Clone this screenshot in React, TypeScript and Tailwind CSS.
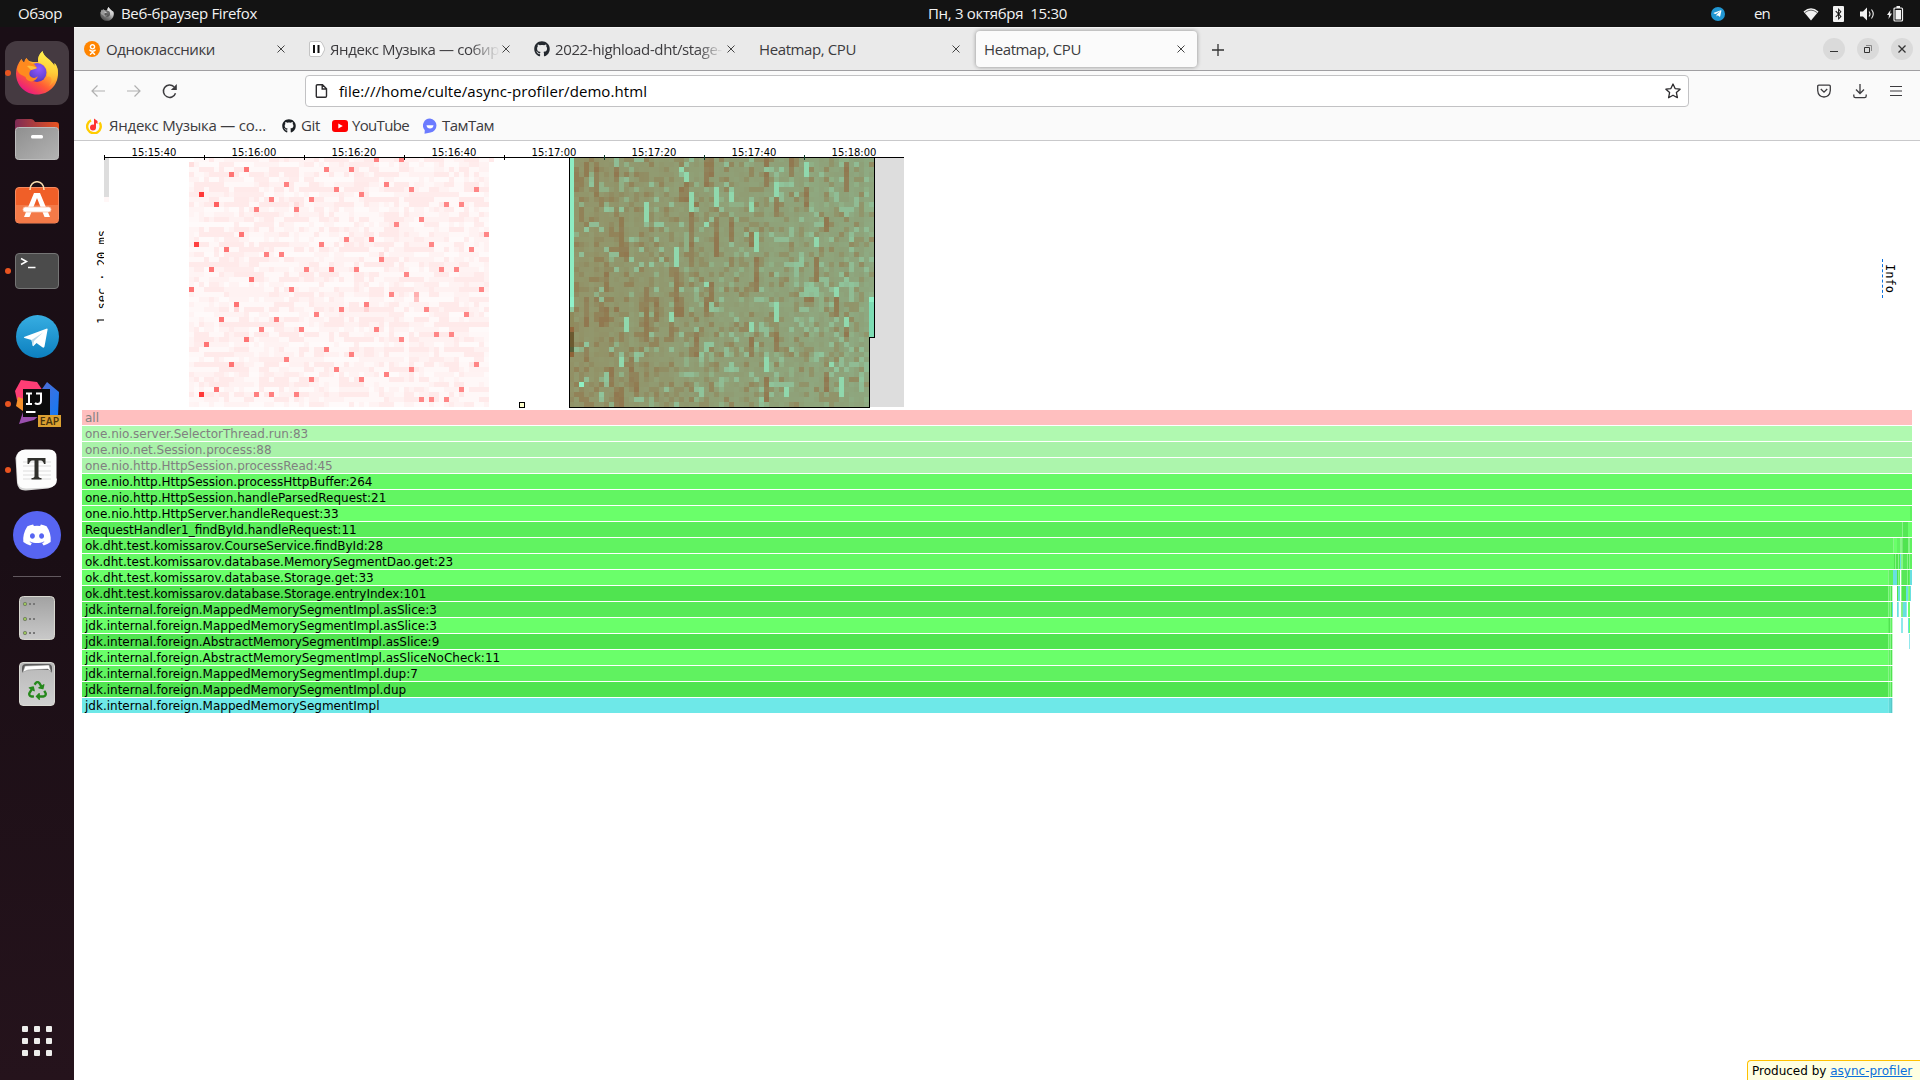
import { useLayoutEffect, useRef, useState } from 'react';
import type { ReactNode } from 'react';
import { FaBluetoothB, FaDiscord, FaGithub, FaOdnoklassniki, FaRecycle, FaTelegramPlane } from 'react-icons/fa';

/* Single-line label whose tracking is adjusted so it fills a known width. */
function Label({ w, className = '', children }: { w: number; className?: string; children: string }) {
  const ref = useRef<HTMLSpanElement>(null);
  const [spacing, setSpacing] = useState(0);
  useLayoutEffect(() => {
    if (ref.current) {
      setSpacing((w - ref.current.getBoundingClientRect().width) / children.length);
    }
  }, [w, children]);
  return (
    <span ref={ref} className={`inline-block shrink-0 whitespace-pre ${className}`} style={{ letterSpacing: spacing }}>
      {children}
    </span>
  );
}

function FirefoxLogo({ className = '' }: { className?: string }) {
  return (
    <svg viewBox="0 0 42 44" className={className}>
      <defs>
        <linearGradient id="ffBody" x1="0.85" y1="0.1" x2="0.25" y2="1">
          <stop offset="0" stopColor="#fff14d" />
          <stop offset="0.35" stopColor="#ffb52e" />
          <stop offset="0.65" stopColor="#ff5a36" />
          <stop offset="1" stopColor="#e8128a" />
        </linearGradient>
        <radialGradient id="ffGlobe" cx="0.6" cy="0.3" r="0.8">
          <stop offset="0" stopColor="#9059ff" />
          <stop offset="0.6" stopColor="#6a45d8" />
          <stop offset="1" stopColor="#4b2aa8" />
        </radialGradient>
        <linearGradient id="ffFlame" x1="0.5" y1="0" x2="0.5" y2="1">
          <stop offset="0" stopColor="#fff44f" />
          <stop offset="0.6" stopColor="#ffd23a" />
          <stop offset="1" stopColor="#ff9a2e" />
        </linearGradient>
      </defs>
      <path d="M26.500 0C23 3 21.500 7 22 11L17 11C14 10.500 12 10 10.500 7C9 8.500 8.500 10 8.500 11.500C7 11 6 9.500 5.500 8C2 12 0 17 0 22.500C0 34.500 9.500 43.500 21 43.500C32.500 43.500 42 34.500 42 22.500C42 17.500 40.500 14 38.500 12L38.500 15C37 12 34.500 9.500 32 7.500C29 5 27 3 26.500 0Z" fill="url(#ffBody)" />
      <path d="M26.500 0C22.500 4 21 8 23 12C28 13 33 18 31 26C35 24 38 29 33 35C39 31 42 25 42 20C41.500 16 40 13.500 38.500 12L38.500 15C36 10 28 7 26.500 0Z" fill="url(#ffFlame)" opacity="0.8" />
      <circle cx="21" cy="21.500" r="9.500" fill="url(#ffGlobe)" />
      <path d="M1 18C2 14 4 11 5.500 8C6 9.500 7 11 8.500 11.500C8.500 10 9 8.500 10.500 7C12 10.500 14 12 18 13C19 14 20 15 21 17C19 18 17 18 15 19C13 21 13 23 14 25C17 28 20 27 22 25C20 32 11 32 9.500 26C6 24 2 23 1 18Z" fill="#ff8a1f" />
      <path d="M11 15C15 14 19 15.500 21 17C19 18.500 17 18 15 19Z" fill="#ffbf3a" />
    </svg>
  );
}

function Running() {
  return <span className="absolute left-[5px] top-1/2 size-[6px] -translate-y-1/2 rounded-full bg-[#e95420]" />;
}

function DockItem({ mt, running, children }: { mt: string; running?: boolean; children: ReactNode }) {
  return (
    <div className={`relative flex w-full shrink-0 justify-center ${mt}`}>
      {running && <Running />}
      {children}
    </div>
  );
}

function Dock() {
  return (
    <nav className="flex h-full w-[74px] shrink-0 flex-col bg-gradient-to-b from-[#1a0e16] via-[#1a0e15] to-[#25131c]">
      <DockItem mt="mt-[14px]" running>
        <div className="flex size-[64px] items-center justify-center rounded-[12px] bg-[#453a41]">
          <FirefoxLogo className="h-[44px] w-[42px]" />
        </div>
      </DockItem>

      <DockItem mt="mt-[14px]">
        <svg viewBox="0 0 44 41" className="h-[41px] w-[44px]">
          <defs>
            <linearGradient id="folderBack"><stop offset="0" stopColor="#7d2b55" /><stop offset="1" stopColor="#e95420" /></linearGradient>
            <linearGradient id="folderFront" x1="0" y1="0" x2="1" y2="1"><stop offset="0" stopColor="#8f8f8f" /><stop offset="1" stopColor="#b3b3b3" /></linearGradient>
          </defs>
          <path d="M0 20V3Q0 0 3 0H16Q18 0 19 1.500L20 3H41Q44 3 44 6V20Z" fill="url(#folderBack)" />
          <rect x="0.500" y="8.500" width="43" height="32" rx="3" fill="url(#folderFront)" stroke="#bdbdbd" />
          <rect x="16" y="16" width="12" height="3.500" rx="1.500" fill="#fff" />
        </svg>
      </DockItem>

      <DockItem mt="mt-[21px]">
        <svg viewBox="0 0 44 43" className="h-[43px] w-[44px]">
          <rect x="0.500" y="6.500" width="43" height="35.500" rx="3.500" fill="#f05f28" stroke="#f58a60" />
          <path d="M1 24H43V39Q43 41.500 40 41.500H4Q1 41.500 1 39Z" fill="#f47a48" />
          <path d="M15 9C15 -2 29 -2 29 9" fill="none" stroke="#f8dcae" strokeWidth="1.600" />
          <path d="M19 12H25L35 36H29.500L22 17L14.500 36H9Z" fill="#fff" />
          <rect x="8" y="26" width="28" height="5" rx="2.500" fill="#fff" stroke="#f9c3aa" strokeWidth="0.800" />
        </svg>
      </DockItem>

      <DockItem mt="mt-[29px]" running>
        <svg viewBox="0 0 44 36" className="h-[36px] w-[44px]">
          <rect x="0.500" y="0.500" width="43" height="35" rx="3.500" fill="#4b4b4b" stroke="#757575" />
          <path d="M6 5.500L11.500 8.500L6 11.500M13 14.500H20.500" fill="none" stroke="#fff" strokeWidth="1.500" />
        </svg>
      </DockItem>

      <DockItem mt="mt-[26px]">
        <svg viewBox="0 0 43 43" className="size-[43px]">
          <defs><linearGradient id="tg" x2="0" y2="1"><stop offset="0" stopColor="#37aee2" /><stop offset="1" stopColor="#0c7fbf" /></linearGradient></defs>
          <circle cx="21.500" cy="21.500" r="21.500" fill="url(#tg)" />
          <path d="M8 22L31 13.500Q32 13.500 31.500 15L28.500 31.500Q28 33.500 26 32L20.500 28L17.500 31Q16.500 31.500 16.500 30L15.500 25L8.500 23Q7.500 22.500 8 22Z" fill="#fff" />
          <path d="M15.500 25L27 17.500L18 26L17 31Z" fill="#b9d9ea" />
        </svg>
      </DockItem>

      <DockItem mt="mt-[22px]" running>
        <svg viewBox="0 0 46 47" className="ml-[2px] h-[47px] w-[46px]">
          <defs><linearGradient id="ijBlue" x2="1" y2="1"><stop offset="0" stopColor="#5c6ad0" /><stop offset="1" stopColor="#087cfa" /></linearGradient></defs>
          <path d="M27 9L32 2L44 12L43 36L30 44L20 30Z" fill="url(#ijBlue)" />
          <path d="M6 0L22 2L30 14L14 26L2 20L0 11Z" fill="#fe3d75" />
          <path d="M3 17L12 20L12 34L1 26Z" fill="#f7912c" />
          <path d="M10 26L26 34L19 40L4 44Z" fill="#9a4fae" />
          <rect x="8" y="9" width="27" height="28" fill="#0b0b0b" />
          <path d="M11 13.500H17M14 13.500V24M11 24H17M21 13.500H26V21Q26 24 22.500 24Q21 24 20 23M11 32H20.500" fill="none" stroke="#fff" strokeWidth="2" />
          <rect x="23" y="35" width="23" height="12" fill="#dba131" />
          <text x="34.500" y="45" textAnchor="middle" fontFamily="Open Sans, sans-serif" fontSize="10.500" fontWeight="600" fill="#45320c">EAP</text>
        </svg>
      </DockItem>

      <DockItem mt="mt-[22px]" running>
        <svg viewBox="0 0 42 42" className="-ml-[2px] size-[42px]">
          <path d="M9 1Q2 2 0.500 9L2 34Q3 42 11 41.500L33 39.500Q42 38 42 30Z" fill="#d6d6d6" />
          <path d="M10 0.500H34Q41.500 0.500 41.500 8V31Q41.500 38 34 38.500L11 39.500Q3 39.500 2.500 32L1.500 9Q2 1 10 0.500Z" fill="#fdfdfd" />
          <path d="M8 13H36M8 17H36M8 22H36M8 26H36M8 30H36" stroke="#ddd" />
          <path d="M12.500 9H30.500V15H29Q28 11.500 26 11.500H23.500V27Q23.500 29 26.500 29V30.500H16.500V29Q19.500 29 19.500 27V11.500H17Q15 11.500 14 15H12.500Z" fill="#30302c" />
        </svg>
      </DockItem>

      <DockItem mt="mt-[20px]">
        <div className="flex size-[48px] items-center justify-center rounded-full bg-[#5765f2]">
          <FaDiscord className="size-[30px] text-white" />
        </div>
      </DockItem>

      <div className="mx-auto mt-[17px] h-px w-[48px] shrink-0 bg-[#61585e]" />

      <DockItem mt="mt-[19px]">
        <svg viewBox="0 0 36 44" className="h-[44px] w-[36px]">
          <defs><linearGradient id="disk" x2="0" y2="1"><stop offset="0" stopColor="#a2a2a2" /><stop offset="1" stopColor="#c9c9c9" /></linearGradient></defs>
          <rect x="0.500" y="0.500" width="35" height="43" rx="4" fill="url(#disk)" stroke="#d8d8d0" />
          {[8, 23, 37].map((y) => (
            <g key={y}>
              <circle cx="6" cy={y} r="1.700" fill="#9bc55a" stroke="#6d7563" strokeWidth="0.800" />
              <path d={`M10 ${y}H12M14 ${y}H16`} stroke="#777" strokeWidth="2" />
            </g>
          ))}
        </svg>
      </DockItem>

      <DockItem mt="mt-[22px]">
        <div className="flex h-[44px] w-[36px] flex-col items-center rounded-[4px] border border-[#dadad4] bg-gradient-to-b from-[#b8b8b8] to-[#d0d0d0]">
          <svg viewBox="0 0 30 9" className="mt-[1px] h-[9px] w-[30px]">
            <path d="M0 9V4Q0 0 4 0H26Q30 0 30 4V9Q29 6 27 6H3Q1 6 0 9Z" fill="#5b5b5b" />
            <path d="M1 8L3 2L27 1L29 8L26 5L6 6Z" fill="#fff" stroke="#888" strokeWidth="0.500" />
          </svg>
          <FaRecycle className="mt-[8px] size-[19px] text-[#26881c]" />
        </div>
      </DockItem>

      <div className="mx-auto mt-auto mb-[24px] grid grid-cols-3 gap-[6px]">
        {Array.from({ length: 9 }, (_, i) => (
          <span key={i} className="size-[6px] rounded-[1px] bg-[#eeeeec]" />
        ))}
      </div>
    </nav>
  );
}

function TopBar() {
  return (
    <header className="flex h-[27px] w-full shrink-0 items-center bg-[#131313] text-[15px] leading-[27px] text-[#f2f2f2]">
      <Label w={44} className="ml-[18px]">Обзор</Label>
      <FirefoxLogo className="ml-[38px] h-[14px] w-[14px] grayscale" />
      <Label w={136} className="ml-[7px]">Веб-браузер Firefox</Label>
      <Label w={139} className="ml-[671px]">Пн, 3 октября  15:30</Label>
      <span className="ml-[644px] flex size-[14px] shrink-0 items-center justify-center rounded-full bg-[#2196d2]">
        <FaTelegramPlane className="-ml-px size-[9px] text-white" />
      </span>
      <Label w={16} className="ml-[29px]">en</Label>
      <svg viewBox="0 0 16 14" className="ml-[33px] h-[14px] w-[16px] shrink-0">
        <path d="M0.500 4.500Q8 -2 15.500 4.500L8 13.500Z" fill="#f2f2f2" />
        <path d="M2 5.500Q8 0.800 14 5.500" fill="none" stroke="#555" strokeWidth="0.900" />
      </svg>
      <span className="ml-[14px] flex h-[16px] w-[11px] shrink-0 items-center justify-center rounded-[1px] bg-[#f2f2f2]">
        <FaBluetoothB className="size-[12px] text-[#131313]" />
      </span>
      <svg viewBox="0 0 15 14" className="ml-[16px] h-[14px] w-[15px] shrink-0">
        <path d="M0 4.500H3L7 0.500V13.500L3 9.500H0Z" fill="#f2f2f2" />
        <path d="M9 4.500Q11 7 9 9.500M11.500 2.500Q15 7 11.500 11.500" fill="none" stroke="#f2f2f2" strokeWidth="1.100" />
      </svg>
      <svg viewBox="0 0 17 16" className="ml-[12px] h-[16px] w-[17px] shrink-0">
        <path d="M3.500 4L0 9H2L1.500 13L5 7.500H3Z" fill="#f2f2f2" />
        <rect x="7" y="2" width="8.500" height="13" rx="1" fill="none" stroke="#f2f2f2" strokeWidth="1.200" />
        <rect x="8.500" y="4" width="5.500" height="9.500" fill="#f2f2f2" />
        <rect x="9.500" y="0" width="3.500" height="2" fill="#f2f2f2" />
      </svg>
    </header>
  );
}

function Cross({ className = '' }: { className?: string }) {
  return (
    <svg viewBox="0 0 8 8" className={`size-[8px] shrink-0 ${className}`}>
      <path d="M0.500 0.500L7.500 7.500M7.500 0.500L0.500 7.500" stroke="#444" strokeWidth="1" />
    </svg>
  );
}

function TabStrip() {
  return (
    <div className="flex h-[44px] shrink-0 items-center border-t border-b border-t-[#f7f7f7] border-b-[#a09fa2] bg-[#eaeaea] text-[15px] text-[#3c3b3e]">
      <div className="flex w-[225px] shrink-0 items-center pl-[10px]">
        <span className="flex size-[16px] shrink-0 items-center justify-center rounded-full bg-[#ff8500]">
          <FaOdnoklassniki className="size-[11px] text-white" />
        </span>
        <Label w={109} className="ml-[6px]">Одноклассники</Label>
        <Cross className="ml-[62px]" />
      </div>
      <div className="flex w-[225px] shrink-0 items-center pl-[10px]">
        <svg viewBox="0 0 16 16" className="size-[16px] shrink-0">
          <path d="M2 0.500H11Q12 0.500 13 2L15.500 7Q16 8 15.500 9L13 14Q12 15.500 11 15.500H2Q0.500 15.500 0.500 14V2Q0.500 0.500 2 0.500Z" fill="#fff" stroke="#c4c4c4" />
          <path d="M5 4V12M9.500 4V12" stroke="#111" strokeWidth="2" />
        </svg>
        <div className="ml-[5px] w-[170px] shrink-0 [mask-image:linear-gradient(to_right,black_82%,transparent)]">
          <Label w={169}>Яндекс Музыка — собир</Label>
        </div>
        <Cross className="ml-[2px]" />
      </div>
      <div className="flex w-[225px] shrink-0 items-center pl-[10px]">
        <FaGithub className="size-[16px] shrink-0 text-[#24292f]" />
        <div className="ml-[5px] w-[168px] shrink-0 [mask-image:linear-gradient(to_right,black_85%,transparent)]">
          <Label w={167}>2022-highload-dht/stage-</Label>
        </div>
        <Cross className="ml-[4px]" />
      </div>
      <div className="flex w-[227px] shrink-0 items-center pl-[10px]">
        <Label w={97}>Heatmap, CPU</Label>
        <Cross className="ml-[96px]" />
      </div>
      <div className="flex h-[36px] w-[221px] shrink-0 items-center rounded-[4px] bg-[#fbfbfb] pl-[8px] shadow-[0_0_4px_rgba(0,0,0,0.4)]">
        <Label w={97}>Heatmap, CPU</Label>
        <Cross className="ml-[96px]" />
      </div>
      <svg viewBox="0 0 12 12" className="mt-px ml-[15px] size-[12px] shrink-0">
        <path d="M6 0V12M0 6H12" stroke="#333" strokeWidth="1.300" />
      </svg>
      <div className="mr-[7px] ml-auto flex gap-[12px]">
        <span className="flex size-[22px] items-center justify-center rounded-full bg-[#dadada]">
          <svg viewBox="0 0 8 8" className="size-[8px]"><path d="M0 6.500H8" stroke="#333" /></svg>
        </span>
        <span className="flex size-[22px] items-center justify-center rounded-full bg-[#dadada]">
          <svg viewBox="0 0 8 8" className="size-[8px]">
            <path d="M0.500 2.500H5.500V7.500H0.500Z" fill="none" stroke="#333" />
            <path d="M2 0.500H7.500V6" fill="none" stroke="#8a8a8a" />
          </svg>
        </span>
        <span className="flex size-[22px] items-center justify-center rounded-full bg-[#dadada]">
          <svg viewBox="0 0 8 8" className="size-[8px]"><path d="M0.500 0.500L7.500 7.500M7.500 0.500L0.500 7.500" stroke="#333" strokeWidth="1.300" /></svg>
        </span>
      </div>
    </div>
  );
}

function NavBar() {
  return (
    <div className="flex h-[41px] shrink-0 items-center bg-[#fafafa] pb-px">
      <svg viewBox="0 0 14 12" className="ml-[17px] h-[12px] w-[14px] shrink-0"><path d="M14 6H1M6.500 0.500L1 6L6.500 11.500" fill="none" stroke="#b0b0b0" strokeWidth="1.200" /></svg>
      <svg viewBox="0 0 14 12" className="ml-[22px] h-[12px] w-[14px] shrink-0"><path d="M0 6H13M7.500 0.500L13 6L7.500 11.500" fill="none" stroke="#b0b0b0" strokeWidth="1.200" /></svg>
      <svg viewBox="0 0 16 16" className="ml-[21px] size-[16px] shrink-0">
        <path d="M13.500 10.200A6.200 6.200 0 1 1 12 3.800" fill="none" stroke="#3c3b3e" strokeWidth="1.500" />
        <path d="M14.800 1V7H8.800Z" fill="#3c3b3e" />
      </svg>
      <div className="ml-[127px] flex h-[32px] w-[1384px] shrink-0 items-center rounded-[4px] border border-[#c2c2c4] bg-white">
        <svg viewBox="0 0 13 14" className="ml-[9px] h-[14px] w-[13px] shrink-0">
          <path d="M2.500 0.800H7.500L11.500 4.800V12Q11.500 13.200 10.300 13.200H2.500Q1.300 13.200 1.300 12V2Q1.300 0.800 2.500 0.800ZM7.200 1V5H11.200" fill="none" stroke="#2c2b2e" strokeWidth="1.400" />
        </svg>
        <Label w={308} className="ml-[11px] text-[15px] text-black">file:///home/culte/async-profiler/demo.html</Label>
        <svg viewBox="0 0 16 16" className="mr-[7px] ml-auto size-[16px] shrink-0">
          <path d="M8 1L10.100 5.600L15.100 6.200L11.400 9.600L12.400 14.700L8 12.200L3.600 14.700L4.600 9.600L0.900 6.200L5.900 5.600Z" fill="none" stroke="#2c2b2e" strokeWidth="1.300" strokeLinejoin="round" />
        </svg>
      </div>
      <svg viewBox="0 0 14 14" className="ml-[128px] size-[14px] shrink-0">
        <path d="M1.800 1.200H12.200Q13.300 1.200 13.300 2.300V6.500Q12.800 12.800 7 13Q1.200 12.800 0.700 6.500V2.300Q0.700 1.200 1.800 1.200ZM3.800 5L7 8.200L10.200 5" fill="none" stroke="#3c3b3e" strokeWidth="1.300" />
      </svg>
      <svg viewBox="0 0 14 16" className="ml-[22px] h-[16px] w-[14px] shrink-0">
        <path d="M7 1V10.500M3 6.500L7 10.500L11 6.500M0.800 11.500V13Q0.800 14.600 2.400 14.600H11.600Q13.200 14.600 13.200 13V11.500" fill="none" stroke="#3c3b3e" strokeWidth="1.300" />
      </svg>
      <svg viewBox="0 0 12 12" className="ml-[23px] size-[12px] shrink-0"><path d="M0 1.500H12M0 6H12M0 10.500H12" stroke="#3c3b3e" strokeWidth="1.100" /></svg>
    </div>
  );
}

function Bookmarks() {
  return (
    <div className="flex h-[29px] shrink-0 items-center border-b border-[#c9c9cb] bg-[#fafafa] pb-px text-[15px] text-[#3c3b3e]">
      <svg viewBox="0 0 16 16" className="ml-[12px] size-[16px] shrink-0">
        <path d="M5 2.300A6.800 6.800 0 1 0 13.500 4.500" fill="none" stroke="#fc0" strokeWidth="2.400" />
        <circle cx="7" cy="9.500" r="3" fill="#f33" />
        <path d="M8 10V0.500L11.500 3V6L10 5V10Z" fill="#f33" />
      </svg>
      <Label w={157} className="ml-[7px]">Яндекс Музыка — со…</Label>
      <FaGithub className="ml-[16px] size-[14px] shrink-0 text-[#1b1f23]" />
      <Label w={19} className="ml-[5px]">Git</Label>
      <svg viewBox="0 0 16 12" className="ml-[12px] h-[12px] w-[16px] shrink-0">
        <rect width="16" height="12" rx="3" fill="#f00" />
        <path d="M6.300 3.400L10.800 6L6.300 8.600Z" fill="#fff" />
      </svg>
      <Label w={57} className="ml-[4px]">YouTube</Label>
      <svg viewBox="0 0 14 16" className="ml-[14px] h-[16px] w-[14px] shrink-0">
        <path d="M7 0.500A7 7 0 0 1 7.500 14.400L1.500 15.800L1.800 12.200A7 7 0 0 1 7 0.500Z" fill="#6b7bff" />
        <path d="M3.500 7.200H10.500Q10 10.500 7 10.500Q4 10.500 3.500 7.200Z" fill="#fff" />
      </svg>
      <Label w={52} className="ml-[5px]">ТамТам</Label>
    </div>
  );
}

/* ---------- heatmap ---------- */

const CELL = 5;
const ROWS = 50;
const COLS = 60;

function makeRandom(seed: number) {
  let s = seed;
  return () => {
    s = (s * 1664525 + 1013904223) >>> 0;
    return s / 4294967296;
  };
}

/* Hot samples per row of the first burst: [row, columns]. */
const HOT: [number, number[]][] = [
  [0, [37, 42]], [2, [11, 27, 32]], [3, [8]], [5, [19, 39]], [6, [29, 44, 57]], [7, [34]], [8, [16, 24]],
  [9, [51, 54]], [10, [13, 21]], [12, [46]], [13, [41]], [15, [10, 59]], [16, [31, 36]], [17, [26, 48]],
  [18, [7, 56]], [19, [15, 18]], [20, [38]], [22, [4, 23, 28, 33, 50, 53]], [23, [43]], [24, [12]],
  [26, [0, 20, 58]], [27, [40]], [29, [9, 35]], [30, [30, 47]], [31, [25, 55]], [32, [6, 17]],
  [34, [14, 22, 37]], [35, [49, 52]], [36, [11, 42]], [37, [3]], [38, [27]], [39, [32]], [40, [19]],
  [41, [8, 57]], [42, [29, 44]], [43, [39]], [44, [24, 34]], [46, [5, 54]], [47, [13, 16, 21]], [48, [46, 48, 51]],
];
const SPECIAL: [number, number, string][] = [
  [2, 7, '#ff3a3a'], [1, 17, '#ff4040'], [2, 47, '#ff3a3a'], [5, 9, '#ff6060'], [45, 27, '#ffb0b0'],
  [45, 28, '#ffc4c4'], [9, 30, '#ffdada'], [35, 30, '#ffd4d4'], [21, 9, '#ffdede'], [38, 19, '#ffdede'], [0, 1, '#ffdede'],
];

/* Vertical streaks of the selected burst: [column, first row, last row]. */
const BRIGHT: [number, number, number][] = [
  [15, 9, 12], [21, 18, 21], [24, 7, 10], [29, 6, 9], [32, 7, 8], [36, 9, 10], [37, 15, 18], [41, 5, 7],
  [47, 1, 3], [49, 16, 17], [11, 32, 34], [20, 31, 32], [10, 40, 41], [41, 29, 32], [36, 33, 34], [39, 40, 42],
  [54, 44, 47], [43, 46, 47], [22, 2, 2], [23, 3, 4], [53, 26, 27], [55, 32, 33], [52, 41, 41], [27, 13, 13], [27, 25, 25],
];
const PALE: [number, number, number][] = [
  [42, 5, 5], [43, 5, 5], [44, 5, 5], [32, 6, 6], [22, 3, 3], [40, 45, 45], [41, 45, 45], [42, 45, 45], [43, 45, 45],
  [44, 45, 45], [58, 44, 46], [38, 48, 49], [13, 39, 40], [10, 39, 39], [26, 46, 47], [47, 25, 26], [48, 25, 26], [46, 27, 27],
  [47, 27, 27], [49, 26, 27], [45, 21, 23], [46, 20, 21], [31, 1, 1], [9, 0, 1], [4, 4, 5], [16, 5, 5], [17, 13, 13],
  [18, 13, 13], [22, 26, 26], [24, 8, 8], [27, 37, 38], [28, 37, 37], [26, 39, 39], [49, 39, 40], [50, 39, 39], [53, 7, 8],
  [55, 10, 11], [56, 10, 10], [54, 10, 10], [54, 25, 25], [55, 24, 25], [56, 25, 25], [57, 25, 25], [56, 15, 16],
  [31, 42, 42], [32, 41, 42], [33, 42, 42], [39, 34, 34], [38, 33, 34], [38, 28, 28], [28, 29, 30], [14, 48, 48],
  [6, 28, 28], [7, 10, 10], [10, 10, 10], [8, 38, 38], [7, 43, 44], [6, 47, 47], [2, 19, 19], [3, 14, 14], [12, 20, 20],
  [13, 22, 22], [12, 16, 16], [14, 18, 18], [16, 21, 21], [3, 37, 37], [40, 2, 2], [42, 2, 2], [39, 2, 2], [53, 42, 42],
];
const BROWN: [number, number, number][] = [
  [21, 22, 26], [24, 11, 20], [29, 12, 19], [32, 12, 16], [36, 15, 17], [36, 36, 39], [37, 20, 26], [41, 8, 11],
  [41, 35, 38], [47, 6, 9], [15, 26, 36], [20, 33, 36], [21, 27, 31], [22, 28, 31], [27, 0, 5], [28, 0, 3], [39, 0, 5],
  [39, 44, 48], [55, 1, 6], [9, 2, 4], [3, 1, 3], [1, 2, 6], [5, 2, 7], [10, 12, 19], [11, 17, 20], [7, 23, 26],
  [49, 20, 24], [48, 28, 28], [47, 28, 28], [53, 28, 31], [22, 6, 8], [23, 5, 8], [5, 28, 28], [6, 30, 33], [7, 30, 32],
  [9, 30, 30], [17, 28, 32], [14, 33, 33], [25, 35, 39], [28, 25, 28], [27, 28, 31], [51, 43, 46], [51, 12, 14], [12, 40, 45],
  [13, 43, 46], [3, 38, 40], [3, 28, 33], [8, 42, 45], [10, 46, 49], [9, 47, 49], [55, 34, 35], [25, 9, 9], [44, 0, 3],
];
const BROWN_TONES = ['#917c52', '#917f57', '#91845b', '#917850'];

const RED_CELLS = (() => {
  const rnd = makeRandom(7);
  const out: [number, number, string][] = [];
  for (let r = 0; r < ROWS; r++) {
    const dense = r % 3 !== 1;
    let tone = '#fff4f4';
    for (let c = 0; c < COLS + 1; c++) {
      if ((c === 0 && r === 0) || (c === COLS && r > 0)) continue;
      if (rnd() < 0.68) {
        const n = rnd();
        if (dense) tone = n < 0.42 ? '#ffeaea' : n < 0.65 ? '#fff2f2' : '#fff8f8';
        else tone = n < 0.2 ? '#ffecec' : n < 0.6 ? '#fff3f3' : '#fffafa';
      }
      out.push([c, r, tone]);
    }
  }
  HOT.forEach(([r, cs]) => cs.forEach((c) => out.push([c, r, c < 13 ? '#ff7474' : c < 40 ? '#ff8080' : '#ff8686'])));
  return out.concat(SPECIAL);
})();

const GREEN_CELLS = (() => {
  const rnd = makeRandom(99);
  const out: [number, number, string][] = [];
  const rgb = (r: number, g: number, b: number) => `rgb(${Math.round(r)},${Math.round(g)},${Math.round(b)})`;
  for (let c = 0; c <= COLS; c++) {
    const t = c / COLS;
    const tint = rnd() * 6 - 3;
    for (let r = 0; r < ROWS; r++) {
      if (c === COLS && r > 35) continue;
      const n = rnd();
      const j = rnd() * 6 - 3 + tint;
      let color = rgb(146 - 4 * t, 147 + 19 * Math.pow(t, 0.7) + j, 104 + 22 * Math.pow(t, 0.7) + j);
      if (n < 0.12 - 0.08 * t) color = rgb(146, 130 + 10 * t, 88 + 10 * t);
      else if (n < 0.24 - 0.08 * t) color = rgb(145, 139 + 10 * t, 97 + 10 * t);
      else if (n > 0.97 - 0.06 * t) color = rgb(144, 188, 148);
      else if (n > 0.93 - 0.08 * t) color = rgb(143, 176, 134);
      out.push([c, r, color]);
    }
  }
  const paint = (list: [number, number, number][], tones: string[]) =>
    list.forEach(([c, a, b]) => {
      for (let r = a; r <= b; r++) out.push([c, r, tones[Math.floor(rnd() * tones.length)]]);
    });
  paint(BROWN, BROWN_TONES);
  paint(PALE, ['#8fc49b', '#8fbd95']);
  paint(BRIGHT, ['#90d8ad']);
  paint([[0, 0, 27]], ['#8eedc4']);
  paint([[0, 28, 29]], ['#90f3cb']);
  paint([[0, 30, 30]], ['#8fc79e']);
  paint([[0, 31, 33]], ['#8f8a5c']);
  paint([[0, 34, 34]], ['#93683e']);
  paint([[0, 35, 37]], ['#6c5a30']);
  paint([[0, 38, 38]], ['#57603a']);
  paint([[0, 39, 39]], ['#8f6438']);
  paint([[2, 45, 45]], ['#8ef0c4']);
  paint([[60, 28, 28]], ['#8ef0c4']);
  paint([[60, 29, 35]], ['#7ddcb3']);
  return out;
})();

const TIMES = ['15:15:40', '15:16:00', '15:16:20', '15:16:40', '15:17:00', '15:17:20', '15:17:40', '15:18:00'];

function Heatmap() {
  return (
    <svg viewBox="74 141 860 269" className="h-[269px] w-[860px] shrink-0" shapeRendering="crispEdges">
      <clipPath id="legendClip"><rect x="90" y="150" width="14" height="250" /></clipPath>
      <g clipPath="url(#legendClip)">
        <text transform="translate(106 324) rotate(-90)" fontFamily="DejaVu Sans Mono, monospace" fontSize="12" xmlSpace="preserve">1 sec · 20 ms</text>
      </g>
      <rect x="104" y="158" width="5" height="39" fill="#ddd" />
      <rect x="104" y="197" width="5" height="5" fill="#fff7f7" />
      {RED_CELLS.map(([c, r, f], i) => (
        <rect key={i} x={189 + c * CELL} y={157 + r * CELL} width={CELL} height={CELL} fill={f} />
      ))}
      {GREEN_CELLS.map(([c, r, f], i) => (
        <rect key={i} x={569 + c * CELL} y={157 + r * CELL} width={CELL} height={CELL} fill={f} />
      ))}
      <path d="M875 158H904V407H870V338H875Z" fill="#ddd" />
      <path d="M569.500 157.500H874.500V337.500H869.500V407.500H569.500Z" fill="none" stroke="#000" />
      <rect x="519.500" y="402.500" width="5" height="5" fill="#ffffcc" stroke="#000" />
      <path d="M104 157.500H904" stroke="#000" />
      {TIMES.map((t, i) => (
        <g key={t}>
          <rect x={104 + i * 100} y="155" width="1" height="5" fill={i > 4 ? '#123f2c' : '#000'} />
          <text x={154 + i * 100} y="156" textAnchor="middle" fontFamily="DejaVu Sans, sans-serif" fontSize="10">{t}</text>
        </g>
      ))}
    </svg>
  );
}

/* ---------- flame graph ---------- */

type Frame = { name: string; color: string; end: number; dim?: boolean; tail?: [number, string][] };

const L = '#88f588';
const G = '#6aff6a';
const M = '#60f260';
const D = '#50e450';
const C = '#68e0e0';
const P = '#90e8ec';
const W = '#ffffff';
const NARROW: [number, string][] = [[1, L], [1, M], [1, L], [1, D], [1, '#c4f7c4']];

const FRAMES: Frame[] = [
  { name: 'all', color: '#ffbfbf', end: 1912, dim: true },
  { name: 'one.nio.server.SelectorThread.run:83', color: '#b0f9b0', end: 1912, dim: true },
  { name: 'one.nio.net.Session.process:88', color: '#a9f2a9', end: 1912, dim: true },
  { name: 'one.nio.http.HttpSession.processRead:45', color: '#acf5ac', end: 1912, dim: true },
  { name: 'one.nio.http.HttpSession.processHttpBuffer:264', color: '#65f965', end: 1912 },
  { name: 'one.nio.http.HttpSession.handleParsedRequest:21', color: '#62f562', end: 1912 },
  { name: 'one.nio.http.HttpServer.handleRequest:33', color: '#6aff6a', end: 1910, tail: [[2, '#60f260']] },
  { name: 'RequestHandler1_findById.handleRequest:11', color: '#5aed5a', end: 1902, tail: [[1, L], [5, '#55e855'], [4, G]] },
  { name: 'ok.dht.test.komissarov.CourseService.findById:28', color: '#61f361', end: 1893, tail: [[1, L], [3, G], [3, M], [2, L], [1, '#77e877'], [5, D], [2, L], [2, M]] },
  { name: 'ok.dht.test.komissarov.database.MemorySegmentDao.get:23', color: '#65f965', end: 1894, tail: [[1, D], [1, L], [2, D], [1, L], [1, D], [1, C], [2, L], [4, '#58e858'], [1, L], [1, D], [1, L], [2, M]] },
  { name: 'ok.dht.test.komissarov.database.Storage.get:33', color: '#6aff6a', end: 1888, tail: [[1, L], [4, M], [4, C], [1, D], [1, L], [1, M], [1, W], [1, L], [5, '#58e858'], [1, L], [1, D], [1, M], [2, C]] },
  { name: 'ok.dht.test.komissarov.database.Storage.entryIndex:101', color: '#50e450', end: 1888, tail: [[1, L], [1, M], [1, L], [1, D], [1, '#c4f7c4'], [4, W], [1, D], [2, C], [1, W], [1, L], [4, D], [2, C], [1, L], [1, G], [1, C], [1, W]] },
  { name: 'jdk.internal.foreign.MappedMemorySegmentImpl.asSlice:3', color: '#57ea57', end: 1888, tail: [[1, L], [1, M], [1, L], [1, D], [1, C], [4, W], [1, C], [1, P], [2, W], [1, L], [1, '#80ea90'], [3, C], [1, P], [1, W], [2, G], [2, W]] },
  { name: 'jdk.internal.foreign.MappedMemorySegmentImpl.asSlice:3', color: '#6aff6a', end: 1888, tail: [[1, '#60f260'], [1, D], [1, L], [1, M], [1, '#c4f7c4'], [8, W], [2, P], [5, W], [1, C], [1, G], [2, W]] },
  { name: 'jdk.internal.foreign.AbstractMemorySegmentImpl.asSlice:9', color: '#50e450', end: 1888, tail: [...NARROW, [16, W], [1, P], [2, W]] },
  { name: 'jdk.internal.foreign.AbstractMemorySegmentImpl.asSliceNoCheck:11', color: '#6aff6a', end: 1888, tail: [...NARROW, [19, W]] },
  { name: 'jdk.internal.foreign.MappedMemorySegmentImpl.dup:7', color: '#60f260', end: 1888, tail: [...NARROW, [19, W]] },
  { name: 'jdk.internal.foreign.MappedMemorySegmentImpl.dup', color: '#50e450', end: 1888, tail: [...NARROW, [19, W]] },
  { name: 'jdk.internal.foreign.MappedMemorySegmentImpl', color: '#6ee8e8', end: 1888, tail: [[1, '#80e8e8'], [2, '#60d8d8'], [1, '#58c8c8'], [1, '#c0f0f0'], [19, W]] },
];

function FlameGraph() {
  return (
    <div className="ml-[8px] flex w-[1830px] flex-col gap-px font-['DejaVu_Sans',sans-serif] text-[12px] leading-[15px]">
      {FRAMES.map((f, i) => (
        <div key={i} className="flex h-[15px]">
          <div className="h-full shrink-0 pt-px pl-[3px] whitespace-pre" style={{ width: f.end - 82, backgroundColor: f.color }}>
            <span className={f.dim ? 'text-[#808080]' : 'text-black'}>{f.name}</span>
          </div>
          {f.tail?.map(([w, color], k) => (
            <div key={k} className="h-full shrink-0" style={{ width: w, backgroundColor: color }} />
          ))}
        </div>
      ))}
    </div>
  );
}

export default function App() {
  return (
    <div className="flex h-[1080px] w-[1920px] flex-col overflow-hidden bg-white font-['Open_Sans','Noto_Sans',sans-serif]">
      <TopBar />
      <div className="flex min-h-0 flex-1">
        <Dock />
        <main className="flex min-w-0 flex-1 flex-col">
          <TabStrip />
          <NavBar />
          <Bookmarks />
          <div className="flex h-[269px] shrink-0 items-start justify-between">
            <Heatmap />
            <div className="mt-[118px] mr-[24px] h-[39px] border-l border-dashed border-[#0a6fdc] pt-[5px] pl-px font-['DejaVu_Sans_Mono',monospace] text-[12px] leading-[12px] text-black [writing-mode:vertical-rl]">
              Info
            </div>
          </div>
          <FlameGraph />
          <footer className="mt-auto ml-auto h-[20px] w-[173px] rounded-tl-[4px] border-t border-l border-[#ffc000] bg-[#ffffe1] pt-px pl-[4px] font-['DejaVu_Sans',sans-serif] text-[12px] leading-[18px] whitespace-nowrap text-black">
            Produced by <span className="text-[#0a6fdc] underline">async-profiler</span>
          </footer>
        </main>
      </div>
    </div>
  );
}
